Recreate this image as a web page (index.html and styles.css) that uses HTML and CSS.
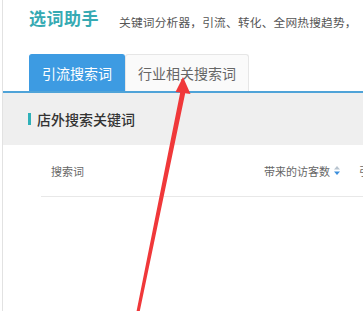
FILE: index.html
```html
<!DOCTYPE html>
<html lang="zh">
<head>
<meta charset="utf-8">
<link rel="stylesheet" href="styles.css">
</head>
<body>
<div class="page">
  <header class="header">
    <h1 class="title">选词助手</h1>
    <span class="subtitle">关键词分析器，引流、转化、全网热搜趋势，</span>
  </header>
  <nav class="tabs">
    <div class="tab active">引流搜索词</div>
    <div class="tab">行业相关搜索词</div>
  </nav>
  <section class="section-head">
    <span class="bar"></span>
    <h2 class="section-title">店外搜索关键词</h2>
  </section>
  <div class="table-head">
    <span class="col col-word">搜索词</span>
    <span class="col col-visit">带来的访客数<svg class="sort" width="6" height="9" viewBox="0 0 6 9"><path d="M3 0L6 3.6H0Z" fill="#b8c4cf"/><path d="M3 9L6 5.4H0Z" fill="#3d8fdc"/></svg></span>
    <span class="col col-more">引</span>
  </div>
  <svg class="arrow" width="363" height="311" viewBox="0 0 363 311">
    <path d="M183 77 L190.5 94 L185.2 93.2 L139.8 311 L136.6 311 L180.2 92.6 L175.5 92 Z" fill="#f0383a"/>
  </svg>
</div>
</body>
</html>
```
FILE: styles.css
```css
html, body {
  margin: 0;
  padding: 0;
  background: #ffffff;
}
body {
  font-family: "Noto Sans CJK SC", "Noto Sans", sans-serif;
  width: 363px;
  height: 311px;
  overflow: hidden;
}
.page {
  position: relative;
  margin-left: 2px;
  border-left: 1px solid #e2e2e2;
  height: 311px;
}
.header {
  display: flex;
  align-items: center;
  height: 40px;
  padding-left: 26px;
  white-space: nowrap;
}
.title {
  margin: 0;
  font-size: 17px;
  font-weight: 700;
  color: #36aab3;
  letter-spacing: 0.5px;
  line-height: 24px;
  padding-bottom: 4px;
}
.subtitle {
  margin-left: 20px;
  font-size: 11.7px;
  letter-spacing: 0.2px;
  color: #555;
  line-height: 16px;
  padding-top: 4px;
}
.tabs {
  display: flex;
  margin-top: 14px;
  padding-left: 26px;
  height: 37px;
  border-bottom: 2px solid #4fa3d8;
}
.tab {
  display: flex;
  align-items: center;
  justify-content: center;
  font-size: 14px;
  color: #666;
  background: #fafafa;
  border: 1px solid #e6e6e6;
  border-bottom: none;
  border-radius: 3px 3px 0 0;
  width: 124px;
  box-sizing: border-box;
}
.tab.active {
  width: 96px;
  color: #fff;
  background: #3d9be2;
  border-color: #3d9be2;
}
.section-head {
  display: flex;
  align-items: center;
  height: 52px;
  background: #efefef;
  padding-left: 25px;
}
.bar {
  width: 3px;
  height: 12px;
  background: #2fb1b9;
  margin-right: 6px;
}
.section-title {
  margin: 0;
  font-size: 14px;
  font-weight: 500;
  color: #333;
}
.table-head {
  position: relative;
  display: flex;
  align-items: center;
  height: 51px;
  margin-left: 38px;
  border-bottom: 1px solid #e8e8e8;
  font-size: 11px;
  color: #666;
  white-space: nowrap;
}
.col-word {
  margin-left: 10px;
}
.col-visit {
  display: flex;
  align-items: center;
  margin-left: auto;
}
.sort {
  margin-left: 4px;
}
.col-more {
  margin-left: 19px;
  margin-right: -8px;
  width: 12px;
  overflow: hidden;
}
.arrow {
  position: absolute;
  left: -3px;
  top: 0;
  pointer-events: none;
}
```
